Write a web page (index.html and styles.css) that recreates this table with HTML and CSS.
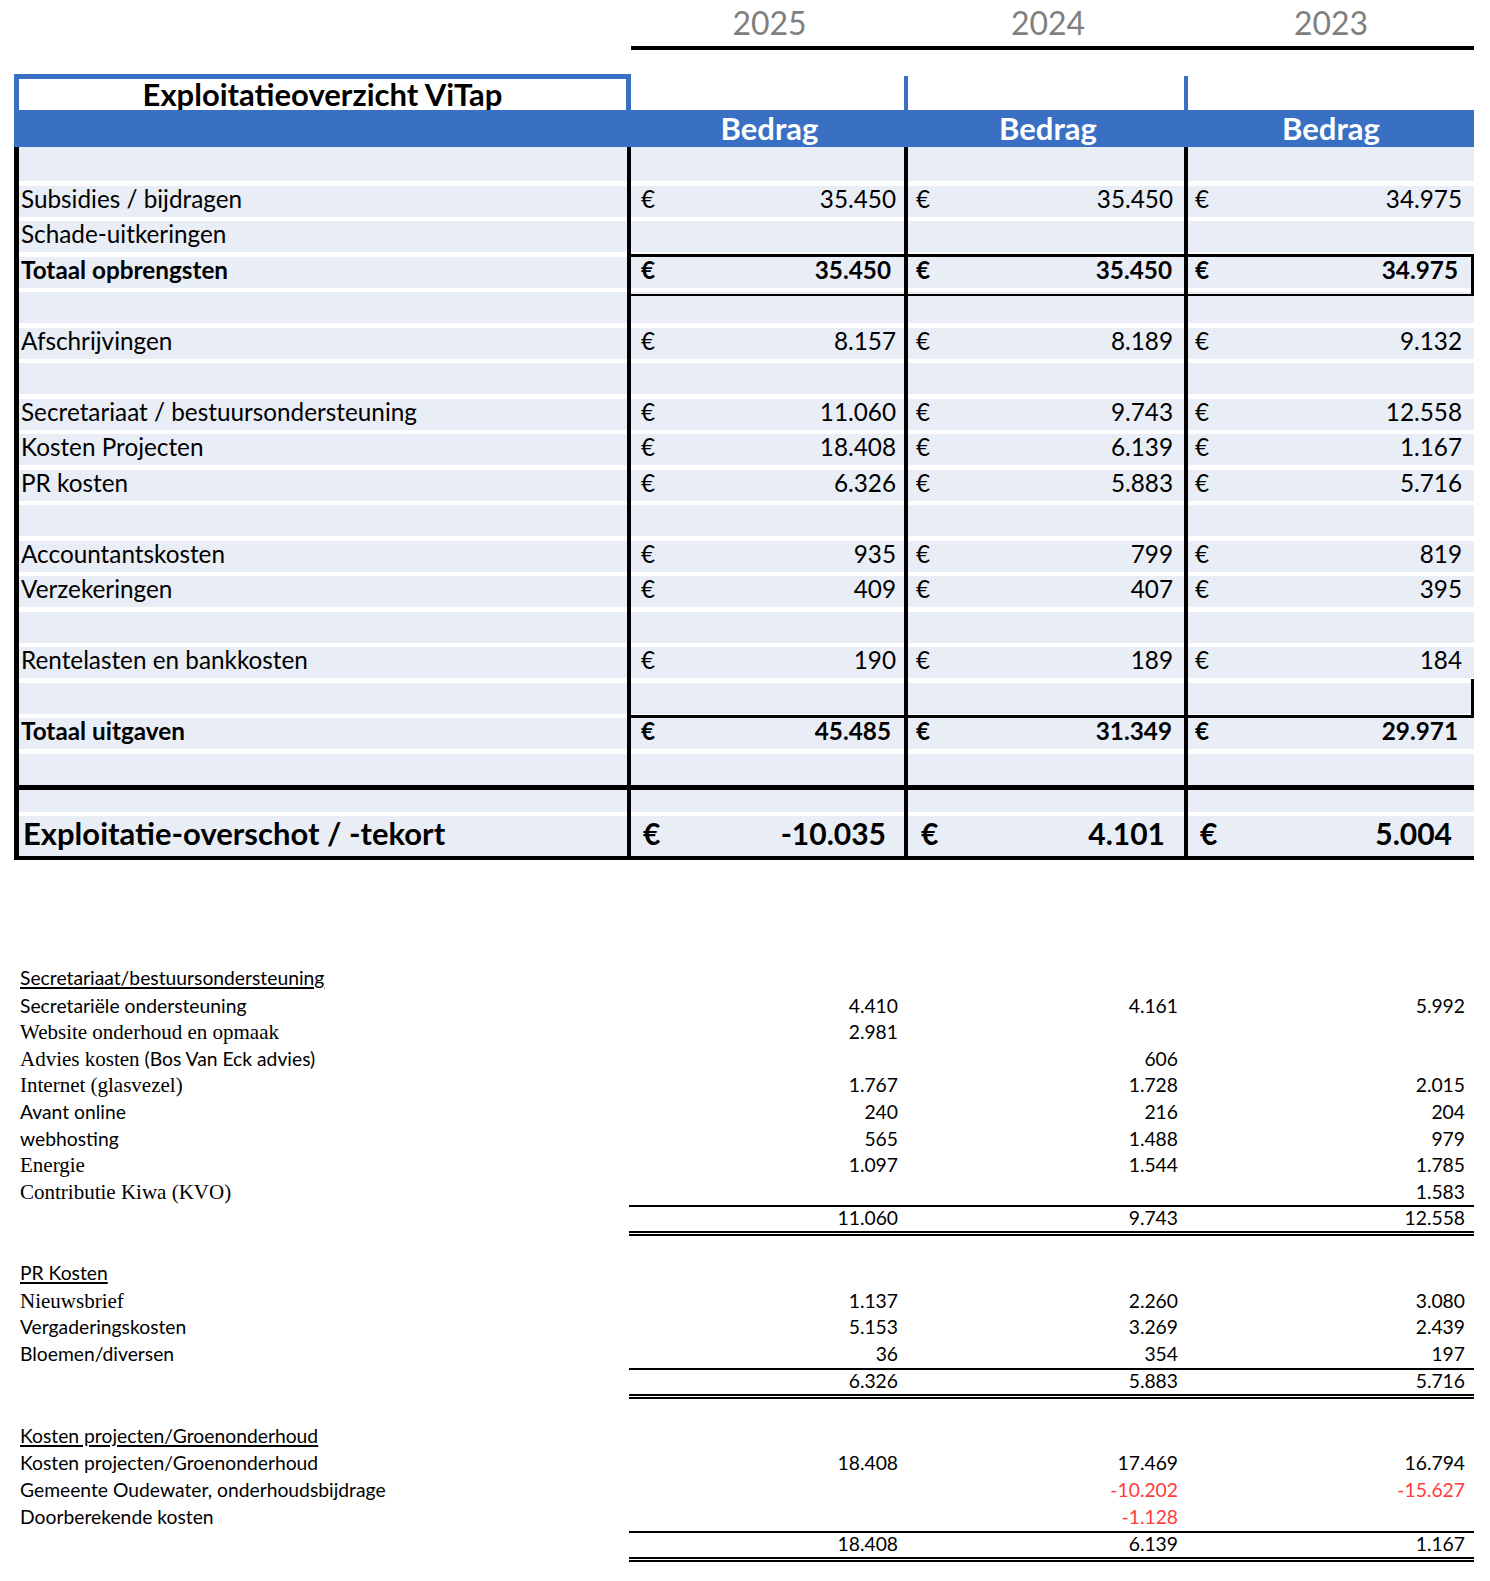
FILE: index.html
```html
<!DOCTYPE html>
<html lang="nl">
<head>
<meta charset="utf-8">
<title>Exploitatieoverzicht ViTap</title>
<link rel="stylesheet" href="styles.css">
</head>
<body>
<div class="sheet">
  <div class="grid years">
    <div></div>
    <div class="year">2025</div>
    <div class="year">2024</div>
    <div class="year">2023</div>
  </div>

  <div class="grid titlerow">
    <div class="titlebox">Exploitatieoverzicht ViTap</div>
    <div class="tsep"></div>
    <div class="tsep"></div>
    <div></div>
  </div>

  <div class="grid headbar">
    <div></div>
    <div class="bh">Bedrag</div>
    <div class="bh">Bedrag</div>
    <div class="bh">Bedrag</div>
  </div>

  <div class="grid row first"><div class="c lab"></div><div class="c n1"></div><div class="c n2"></div><div class="c n3"></div></div>

  <div class="grid row"><div class="c lab">Subsidies / bijdragen</div><div class="c n n1"><span>€</span><span>35.450</span></div><div class="c n n2"><span>€</span><span>35.450</span></div><div class="c n n3"><span>€</span><span>34.975</span></div></div>
  <div class="grid row"><div class="c lab">Schade-uitkeringen</div><div class="c n1"></div><div class="c n2"></div><div class="c n3"></div></div>
  <div class="grid row tot box"><div class="c lab">Totaal opbrengsten</div><div class="c n n1"><span>€</span><span>35.450</span></div><div class="c n n2"><span>€</span><span>35.450</span></div><div class="c n n3"><span>€</span><span>34.975</span></div></div>
  <div class="grid row"><div class="c lab"></div><div class="c n1"></div><div class="c n2"></div><div class="c n3"></div></div>
  <div class="grid row"><div class="c lab">Afschrijvingen</div><div class="c n n1"><span>€</span><span>8.157</span></div><div class="c n n2"><span>€</span><span>8.189</span></div><div class="c n n3"><span>€</span><span>9.132</span></div></div>
  <div class="grid row"><div class="c lab"></div><div class="c n1"></div><div class="c n2"></div><div class="c n3"></div></div>
  <div class="grid row"><div class="c lab">Secretariaat / bestuursondersteuning</div><div class="c n n1"><span>€</span><span>11.060</span></div><div class="c n n2"><span>€</span><span>9.743</span></div><div class="c n n3"><span>€</span><span>12.558</span></div></div>
  <div class="grid row"><div class="c lab">Kosten Projecten</div><div class="c n n1"><span>€</span><span>18.408</span></div><div class="c n n2"><span>€</span><span>6.139</span></div><div class="c n n3"><span>€</span><span>1.167</span></div></div>
  <div class="grid row"><div class="c lab">PR kosten</div><div class="c n n1"><span>€</span><span>6.326</span></div><div class="c n n2"><span>€</span><span>5.883</span></div><div class="c n n3"><span>€</span><span>5.716</span></div></div>
  <div class="grid row"><div class="c lab"></div><div class="c n1"></div><div class="c n2"></div><div class="c n3"></div></div>
  <div class="grid row"><div class="c lab">Accountantskosten</div><div class="c n n1"><span>€</span><span>935</span></div><div class="c n n2"><span>€</span><span>799</span></div><div class="c n n3"><span>€</span><span>819</span></div></div>
  <div class="grid row"><div class="c lab">Verzekeringen</div><div class="c n n1"><span>€</span><span>409</span></div><div class="c n n2"><span>€</span><span>407</span></div><div class="c n n3"><span>€</span><span>395</span></div></div>
  <div class="grid row"><div class="c lab"></div><div class="c n1"></div><div class="c n2"></div><div class="c n3"></div></div>
  <div class="grid row"><div class="c lab">Rentelasten en bankkosten</div><div class="c n n1"><span>€</span><span>190</span></div><div class="c n n2"><span>€</span><span>189</span></div><div class="c n n3"><span>€</span><span>184</span></div></div>
  <div class="grid row"><div class="c lab"></div><div class="c n1"></div><div class="c n2"></div><div class="c n3 redge"></div></div>
  <div class="grid row tot topline"><div class="c lab">Totaal uitgaven</div><div class="c n n1"><span>€</span><span>45.485</span></div><div class="c n n2"><span>€</span><span>31.349</span></div><div class="c n n3"><span>€</span><span>29.971</span></div></div>
  <div class="grid row full"><div class="c lab"></div><div class="c n1"></div><div class="c n2"></div><div class="c n3"></div></div>
  <div class="thick"></div>
  <div class="grid row short"><div class="c lab"></div><div class="c n1"></div><div class="c n2"></div><div class="c n3"></div></div>
  <div class="grid row big"><div class="c lab">Exploitatie-overschot / -tekort</div><div class="c n n1"><span>€</span><span>-10.035</span></div><div class="c n n2"><span>€</span><span>4.101</span></div><div class="c n n3"><span>€</span><span>5.004</span></div></div>
  <div class="bottombar"></div>

  <div class="details">
    <div class="drow dhead"><div class="dl"><span class="ul">Secretariaat/bestuursondersteuning</span></div><div></div><div></div><div></div></div>
    <div class="drow"><div class="dl">Secretariële ondersteuning</div><div class="v v1">4.410</div><div class="v v2">4.161</div><div class="v v3">5.992</div></div>
    <div class="drow"><div class="dl"><span class="sf">Website onderhoud en opmaak</span></div><div class="v v1">2.981</div><div class="v v2"></div><div class="v v3"></div></div>
    <div class="drow"><div class="dl"><span class="sf">Advies kosten</span> (Bos Van Eck advies)</div><div class="v v1"></div><div class="v v2">606</div><div class="v v3"></div></div>
    <div class="drow"><div class="dl"><span class="sf">Internet (glasvezel)</span></div><div class="v v1">1.767</div><div class="v v2">1.728</div><div class="v v3">2.015</div></div>
    <div class="drow"><div class="dl">Avant online</div><div class="v v1">240</div><div class="v v2">216</div><div class="v v3">204</div></div>
    <div class="drow"><div class="dl">webhosting</div><div class="v v1">565</div><div class="v v2">1.488</div><div class="v v3">979</div></div>
    <div class="drow"><div class="dl"><span class="sf">Energie</span></div><div class="v v1">1.097</div><div class="v v2">1.544</div><div class="v v3">1.785</div></div>
    <div class="drow"><div class="dl"><span class="sf">Contributie Kiwa (KVO)</span></div><div class="v v1"></div><div class="v v2"></div><div class="v v3">1.583</div></div>
    <div class="drow sum s1"><div class="dl"></div><div class="v v1">11.060</div><div class="v v2">9.743</div><div class="v v3">12.558</div></div>

    <div class="drow dhead gap"><div class="dl"><span class="ul">PR Kosten</span></div><div></div><div></div><div></div></div>
    <div class="drow"><div class="dl"><span class="sf">Nieuwsbrief</span></div><div class="v v1">1.137</div><div class="v v2">2.260</div><div class="v v3">3.080</div></div>
    <div class="drow"><div class="dl">Vergaderingskosten</div><div class="v v1">5.153</div><div class="v v2">3.269</div><div class="v v3">2.439</div></div>
    <div class="drow"><div class="dl">Bloemen/diversen</div><div class="v v1">36</div><div class="v v2">354</div><div class="v v3">197</div></div>
    <div class="drow sum"><div class="dl"></div><div class="v v1">6.326</div><div class="v v2">5.883</div><div class="v v3">5.716</div></div>

    <div class="drow dhead gap"><div class="dl"><span class="ul">Kosten projecten/Groenonderhoud</span></div><div></div><div></div><div></div></div>
    <div class="drow"><div class="dl">Kosten projecten/Groenonderhoud</div><div class="v v1">18.408</div><div class="v v2">17.469</div><div class="v v3">16.794</div></div>
    <div class="drow"><div class="dl">Gemeente Oudewater, onderhoudsbijdrage</div><div class="v v1"></div><div class="v v2 neg">-10.202</div><div class="v v3 neg">-15.627</div></div>
    <div class="drow"><div class="dl">Doorberekende kosten</div><div class="v v1"></div><div class="v v2 neg">-1.128</div><div class="v v3"></div></div>
    <div class="drow sum"><div class="dl"></div><div class="v v1">18.408</div><div class="v v2">6.139</div><div class="v v3">1.167</div></div>
  </div>
</div>
</body>
</html>
```

FILE: styles.css
```css
* { box-sizing: border-box; margin: 0; padding: 0; }

html, body { background: #ffffff; }

body {
  width: 1490px;
  font-family: Lato, "Liberation Sans", sans-serif;
  color: #000000;
}

.sheet { padding-left: 14px; }

.grid {
  display: grid;
  width: 1460px;
  grid-template-columns: 617px 277px 280px 286px;
}

/* Years */
.years { height: 50px; }
.year {
  height: 50px;
  border-bottom: 4px solid #000;
  text-align: center;
  font-size: 32px;
  line-height: 46px;
  color: #7f7f7f;
}

/* Title */
.titlerow { margin-top: 24px; height: 36px; }
.titlebox {
  height: 36px;
  border: 5px solid #3a70c3;
  border-bottom: 0;
  text-align: center;
  font-weight: 700;
  font-size: 31px;
  line-height: 31px;
  white-space: nowrap;
}
.tsep { margin-top: 2px; border-right: 4px solid #3a70c3; }

/* Blue header (sits over the title's descenders, as in the sheet) */
.headbar {
  position: relative;
  z-index: 1;
  height: 37px;
  background: #3a70c3;
  color: #ffffff;
  font-weight: 700;
  font-size: 31px;
  line-height: 37px;
}
.bh { text-align: center; }

/* Main rows */
.row { height: 35.5px; }
.row .c { background: linear-gradient(#e9edf6 0 31px, #ffffff 31px); }
.row.first { height: 38.7px; }
.row.first .c { background: linear-gradient(#e9edf6 0 34px, #ffffff 34px); }
.row.full { height: 31px; }
.row.full .c { background: #e9edf6; }
.row.short { height: 26.7px; }
.row.short .c { background: linear-gradient(#e9edf6 0 22px, #ffffff 22px); }
.row.big { height: 40px; }
.row.big .c { background: #e9edf6; }

.lab {
  border-left: 5px solid #000;
  border-right: 4px solid #000;
  padding-left: 2px;
  font-size: 24.3px;
  line-height: 25.5px;
  white-space: nowrap;
}
.n1, .n2 { border-right: 4px solid #000; }
.n {
  display: flex;
  justify-content: space-between;
  font-size: 24.3px;
  line-height: 25.5px;
}
.n1 { padding: 0 8px 0 10px; }
.n2 { padding: 0 11px 0 8px; }
.n3 { padding: 0 12px 0 7px; }

.tot .c { font-weight: 700; }
.tot .n1 { padding-right: 13px; }
.tot .n2 { padding-right: 12px; }
.tot .n3 { padding-right: 16px; }

.box .n, .topline .n, .redge { position: relative; }
.box .n::before {
  content: "";
  position: absolute;
  left: 0;
  right: -4px;
  top: -3px;
  height: 37px;
  border-top: 3px solid #000;
  border-bottom: 2px solid #000;
}
.box .n3::before { right: 0; border-right: 3px solid #000; }

.topline .n::before {
  content: "";
  position: absolute;
  left: 0;
  right: -4px;
  top: -3px;
  height: 3px;
  background: #000;
}
.topline .n3::before { right: 0; }

.redge::after {
  content: "";
  position: absolute;
  right: 0;
  top: -4px;
  height: 38px;
  width: 3px;
  background: #000;
}

.thick { height: 5px; width: 1460px; background: #000; }
.bottombar { height: 4px; width: 1460px; background: #000; }

.big .c { font-weight: 700; font-size: 30px; line-height: 35px; }
.big .lab { padding-left: 4px; font-size: 31px; line-height: 34px; }
.big .n1 { padding: 0 18px 0 12px; }
.big .n2 { padding: 0 19px 0 13px; }
.big .n3 { padding: 0 22px 0 12px; }

/* Details */
.details { margin-top: 107px; }
.drow {
  display: grid;
  grid-template-columns: 615px 279px 280px 286px;
  height: 26.6px;
  font-size: 19.3px;
  line-height: 22.8px;
  white-space: nowrap;
}
.drow.dhead { height: 27.2px; }
.drow.gap { margin-top: 26px; }
.dl { padding-left: 6px; }
.v { text-align: right; }
.v1 { padding-right: 10px; }
.v2 { padding-right: 10px; }
.v3 { padding-right: 9px; }
.neg { color: #ff3b3b; }

.ul {
  text-decoration: underline;
  text-decoration-thickness: 1.5px;
  text-underline-offset: 2px;
}
.sf {
  font-family: "Liberation Serif", "Times New Roman", serif;
  font-size: 21px;
}

.sum { height: 31px; margin-top: -1px; }
.sum.s1 { margin-top: -2px; }
.sum .v {
  border-top: 2px solid #000;
  border-bottom: 5px double #000;
}
```
